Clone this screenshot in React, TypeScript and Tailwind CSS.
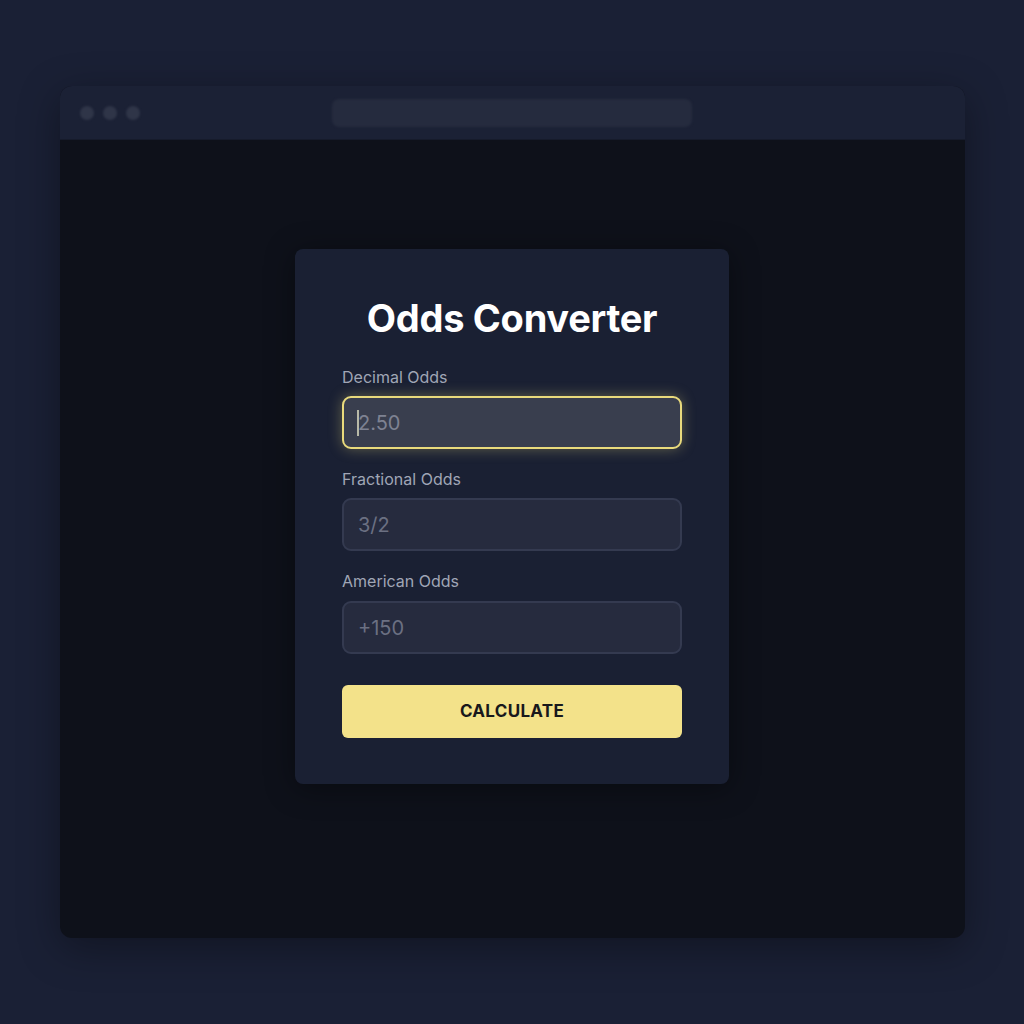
import React from "react";

export default function App() {
  return (
    <div
      className="w-[1024px] h-[1024px] bg-[#1a2035] flex items-center justify-center overflow-hidden"
      style={{ fontFamily: "Inter, 'Noto Sans', sans-serif" }}
    >
      <div className="w-[905px] h-[852px] rounded-[12px] overflow-hidden flex flex-col shadow-[0_10px_40px_rgba(0,0,0,0.35)] bg-[#0e111a]">
        <div className="h-[54px] shrink-0 bg-[#1b2135] border-b border-[#161b2b] flex items-center px-[20px] relative">
          <div className="flex gap-[9px] blur-[1px]">
            <div className="w-[14px] h-[14px] rounded-full bg-[#2f3548]" />
            <div className="w-[14px] h-[14px] rounded-full bg-[#2f3548]" />
            <div className="w-[14px] h-[14px] rounded-full bg-[#2f3548]" />
          </div>
          <div className="ml-[192px] w-[360px] h-[28px] rounded-[7px] bg-[#252b3e] blur-[1px]" />
        </div>
        <div className="flex-1 flex justify-center pt-[109px]">
          <div className="w-[434px] h-[535px] bg-[#1a2033] rounded-[8px] px-[47px] pt-[47px] flex flex-col shadow-[0_4px_30px_rgba(0,0,0,0.4)]">
            <h1 className="text-[38px] leading-[44px] font-bold text-white text-center tracking-[-0.3px]">
              Odds Converter
            </h1>
            <label className="mt-[27px] text-[16px] leading-[20px] text-[#a0a6b6]">Decimal Odds</label>
            <div className="mt-[9px] h-[53px] rounded-[9px] border-2 border-[#e9da7c] bg-[#393e4e] flex items-center pl-[13px] shadow-[0_0_14px_rgba(233,218,124,0.35)]">
              <span className="w-[2px] h-[26px] bg-[#b8b9a8] mr-[-1px]" />
              <span className="text-[20px] text-[#7e8292]">2.50</span>
            </div>
            <label className="mt-[20px] text-[16px] leading-[20px] text-[#a0a6b6]">Fractional Odds</label>
            <div className="mt-[9px] h-[53px] rounded-[9px] border-2 border-[#343a50] bg-[#262b3e] flex items-center pl-[14px]">
              <span className="text-[20px] text-[#6b7082]">3/2</span>
            </div>
            <label className="mt-[20px] text-[16px] leading-[20px] text-[#a0a6b6]">American Odds</label>
            <div className="mt-[10px] h-[53px] rounded-[9px] border-2 border-[#343a50] bg-[#262b3e] flex items-center pl-[14px]">
              <span className="text-[20px] text-[#6b7082]">+150</span>
            </div>
            <button className="mt-[31px] h-[53px] rounded-[6px] bg-[#f3e28a] text-[#18181b] text-[17px] font-bold tracking-[0.3px]">
              CALCULATE
            </button>
          </div>
        </div>
      </div>
    </div>
  );
}
